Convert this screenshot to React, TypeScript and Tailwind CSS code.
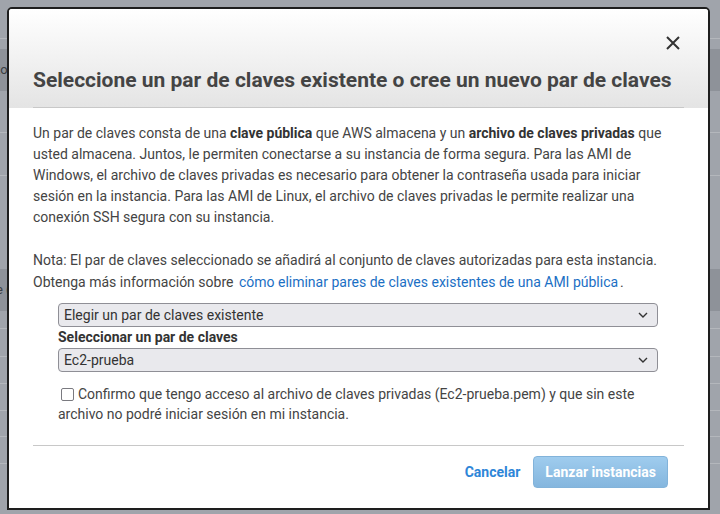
import React from 'react';

function Chevron() {
  return (
    <svg width="10" height="6" viewBox="0 0 10 6" className="shrink-0">
      <path d="M1 1l4 4 4-4" fill="none" stroke="#333" strokeWidth="1.4" />
    </svg>
  );
}

function FakeSelect({ value }: { value: string }) {
  return (
    <div className="flex h-[24px] w-[600px] items-center justify-between rounded-[4px] border border-[#8f8f96] bg-[#e9e9ed] pl-[5px] pr-[9px] text-[14px] text-[#333]">
      <span>{value}</span>
      <Chevron />
    </div>
  );
}

export default function App() {
  return (
    <div
      className="relative h-[514px] w-[720px] overflow-hidden bg-[#a0a4ab]"
      style={{ fontFamily: 'Roboto, "Liberation Sans", sans-serif' }}
    >
      {/* page behind the overlay */}
      <div className="flex flex-col text-[13px] text-[#3b3e42]">
        <div className="h-[39px] border-b border-[#b4b7bc]" />
        <div className="h-[10px]" />
        <div className="flex h-[42px] items-center bg-[#8e9299]">
          <span className="-ml-[4px]">to</span>
        </div>
        <div className="h-[42px] border-b border-[#b4b7bc]" />
        <div className="h-[43px] border-b border-[#b4b7bc]" />
        <div className="h-[93px]" />
        <div className="flex h-[42px] items-center bg-[#8e9299]">
          <span className="-ml-[4px]">e (</span>
        </div>
        <div className="h-[18px] border-b border-[#b4b7bc]" />
        <div className="h-[28px] border-b border-[#b4b7bc]" />
        <div className="h-[27px] border-b border-[#b4b7bc]" />
        <div className="h-[27px] border-b border-[#b4b7bc]" />
        <div className="h-[26px] border-b border-[#b4b7bc]" />
        <div className="h-[27px] border-b border-[#b4b7bc]" />
      </div>

      {/* modal */}
      <div className="absolute left-[7px] top-[7px] flex h-[503px] w-[703px] flex-col overflow-hidden rounded-t-[5px] border-2 border-[#1e1e1e] bg-white text-[14px] text-[#444]">
        <div className="relative h-[99px] shrink-0 bg-gradient-to-b from-[#ffffff] to-[#e4e4e4] px-[24px]">
          <button className="absolute right-[27px] top-[26px] text-[#333]">
            <svg width="16" height="16" viewBox="0 0 16 16">
              <path d="M2 2l12 12M14 2L2 14" stroke="#333" strokeWidth="2" />
            </svg>
          </button>
          <div className="flex h-full items-end border-b border-[#c8c8c8] pb-[14px]">
            <h2 className="text-[21px] font-bold leading-[26px] text-[#444]">
              Seleccione un par de claves existente o cree un nuevo par de claves
            </h2>
          </div>
        </div>

        <div className="px-[24px] pt-[15px]">
          <p className="leading-[21px]">
            Un par de claves consta de una <b className="text-[#333]">clave pública</b> que AWS almacena y un{' '}
            <b className="text-[#333]">archivo de claves privadas</b> que usted almacena. Juntos, le permiten conectarse a
            su instancia de forma segura. Para las AMI de Windows, el archivo de claves privadas es necesario para obtener
            la contraseña usada para iniciar sesión en la instancia. Para las AMI de Linux, el archivo de claves privadas
            le permite realizar una conexión SSH segura con su instancia.
          </p>
          <p className="mt-[21px] leading-[22px]">
            Nota: El par de claves seleccionado se añadirá al conjunto de claves autorizadas para esta instancia. Obtenga
            más información sobre <a className="ml-[2px] mr-[2px] text-[#1b6fc4]">cómo eliminar pares de claves existentes de una AMI pública</a>.
          </p>

          <div className="ml-[25px] mt-[10px] w-[600px]">
            <FakeSelect value="Elegir un par de claves existente" />
            <div className="text-[14px] font-bold leading-[21px] text-[#333]">Seleccionar un par de claves</div>
            <FakeSelect value="Ec2-prueba" />
            <p className="mt-[12px] leading-[20px]">
              <span className="ml-[3px] mr-[4px] inline-block h-[13px] w-[13px] rounded-[2px] border-[1.5px] border-[#7a7a80] bg-white align-[-2px]" />
              Confirmo que tengo acceso al archivo de claves privadas (Ec2-prueba.pem) y que sin este archivo no podré
              iniciar sesión en mi instancia.
            </p>
          </div>

          <div className="mt-[21px] border-t border-[#c8c8c8]" />

          <div className="flex items-center justify-end gap-[13px] pr-[16px] pt-[10px]">
            <span className="font-bold text-[#2e86d8]">Cancelar</span>
            <button className="h-[32px] rounded-[4px] border border-[#82b3da] bg-gradient-to-b from-[#9fccee] to-[#84b6de] px-[11px] text-[14px] font-bold text-white">
              Lanzar instancias
            </button>
          </div>
        </div>
      </div>
    </div>
  );
}
